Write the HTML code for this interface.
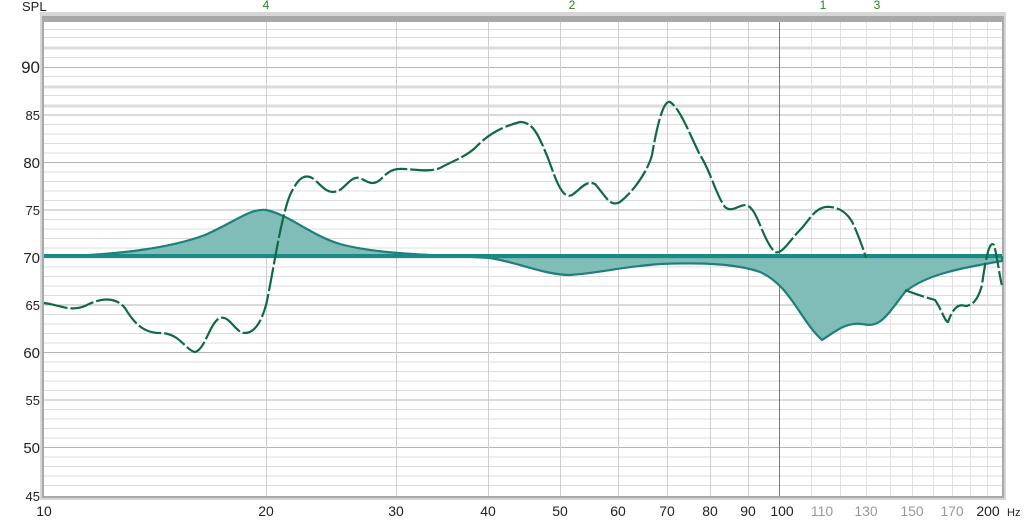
<!DOCTYPE html><html><head><style>body{margin:0;width:1024px;height:521px;background:#fff;overflow:hidden;font-family:"Liberation Sans",sans-serif}</style></head><body>
<svg width="1024" height="521" xmlns="http://www.w3.org/2000/svg" font-family="Liberation Sans, sans-serif">
<rect x="40" y="12" width="966" height="488" fill="#d6d6d6"/>
<rect x="42" y="16" width="962" height="482" fill="#a8a8a8"/>
<rect x="44" y="22" width="958" height="474" fill="#fff"/>
<g stroke="#dcdcdc" stroke-width="1">
<line x1="44" x2="1002" y1="29.5" y2="29.5"/><line x1="44" x2="1002" y1="37.5" y2="37.5"/><line x1="44" x2="1002" y1="48" y2="48" stroke-width="3"/><line x1="44" x2="1002" y1="57.5" y2="57.5"/>
<line x1="44" x2="1002" y1="76.5" y2="76.5"/><line x1="44" x2="1002" y1="87" y2="87" stroke-width="3"/><line x1="44" x2="1002" y1="95.5" y2="95.5"/><line x1="44" x2="1002" y1="106" y2="106" stroke-width="3"/>
</g>
<g stroke="#dcdcdc">
<path d="M44 124.5H1002M44 134H1002M44 143.5H1002M44 153H1002M44 172H1002M44 181.5H1002M44 191H1002M44 200.5H1002M44 219.5H1002M44 229H1002M44 238.5H1002M44 248H1002M44 267H1002M44 276.5H1002M44 286H1002M44 295.5H1002M44 314.5H1002M44 324H1002M44 333.5H1002M44 343H1002M44 362H1002M44 371.5H1002M44 381H1002M44 390.5H1002M44 409.5H1002M44 419H1002M44 428.5H1002M44 438H1002M44 457H1002M44 466.5H1002M44 476H1002M44 485.5H1002"/>
</g>
<g stroke="#b4b4b4">
<path d="M44 67.5H1002M44 115H1002M44 162.5H1002M44 210H1002M44 305H1002M44 352.5H1002M44 400H1002M44 447.5H1002"/>
</g>
<g stroke="#cfcfcf">
<path d="M266.5 22V496M396.5 22V496M488.5 22V496M560.5 22V496M618.5 22V496M667.5 22V496M710.5 22V496M748.5 22V496"/>
<path d="M811.5 22V496M840.5 22V496M866.5 22V496M890.5 22V496M912.5 22V496M933.5 22V496M952.5 22V496M970.5 22V496M987.5 22V496" stroke="#e0e0e0"/>
</g>
<line x1="779.5" x2="779.5" y1="22" y2="496" stroke="#7a7a7a"/>
<path d="M44 257 C120 255 170 248 205 235 C235 222 250 208 266 210 C290 215 310 235 340 244 C380 255 440 255 490 258 C520 263 545 275 570 275 C600 273 620 267 660 264 C710 262 740 265 760 272 C790 285 800 320 822 340 C835 332 845 322 862 324 C880 328 885 318 905 292 C925 275 960 268 1002 261 L1002 257 Z" fill="#80bcb8" stroke="#1f7f7a" stroke-width="2.2"/>
<line x1="44" y1="256" x2="1002" y2="256" stroke="#1a8a86" stroke-width="4"/>
<path d="M44 303 C60 305 70 312 85 306 C100 298 115 296 125 308 C135 325 145 333 160 333 C180 333 185 350 195 352 C205 350 210 322 220 318 C230 315 235 333 245 333 C255 333 262 320 266 305 C272 280 280 220 290 195 C298 178 305 172 315 180 C325 190 330 195 340 190 C348 184 352 176 360 178 C368 182 372 186 380 180 C388 172 392 168 405 169 C420 170 430 172 440 168 C455 160 465 157 475 148 C490 132 505 126 520 122 C535 122 540 140 548 158 C556 180 562 200 572 195 C582 188 586 180 595 184 C605 195 610 208 620 202 C635 190 648 170 652 155 C658 120 664 100 670 102 C680 108 690 135 700 155 C710 170 716 195 725 207 C732 213 738 205 746 205 C758 208 762 240 775 252 C782 255 790 240 800 230 C808 222 814 209 825 207 C835 206 848 210 855 228 C860 240 863 248 866 258" fill="none" stroke="#0f6a44" stroke-width="2.2" stroke-dasharray="24 3"/>
<path d="M905 290 C915 294 928 298 935 300 C942 310 945 322 948 322 C952 310 958 303 965 306 C972 306 978 300 982 285 C986 255 990 240 994 245 C998 260 1000 280 1002 285" fill="none" stroke="#0f6a44" stroke-width="2.2" stroke-dasharray="20 3"/>
<g font-size="13" fill="#222" text-anchor="end">
<text x="40" y="73" font-size="17">90</text><text x="40" y="120">85</text><text x="40" y="168" font-size="15">80</text><text x="40" y="215">75</text><text x="40" y="263" font-size="15">70</text><text x="40" y="310">65</text><text x="40" y="358" font-size="15">60</text><text x="40" y="405">55</text><text x="40" y="453" font-size="15">50</text><text x="40" y="501">45</text>
</g>
<text x="22" y="11" font-size="13" fill="#222">SPL</text>
<g font-size="12" fill="#1a8a1a" text-anchor="middle"><text x="266" y="9">4</text><text x="572" y="9">2</text><text x="823" y="9">1</text><text x="877" y="9">3</text></g>
<g font-size="14" fill="#222" text-anchor="middle">
<text x="44" y="516">10</text><text x="266" y="516">20</text><text x="396" y="516">30</text><text x="488" y="516">40</text><text x="560" y="516">50</text><text x="618" y="516">60</text><text x="667" y="516">70</text><text x="710" y="516">80</text><text x="748" y="516">90</text><text x="782" y="516">100</text>
<g fill="#999"><text x="822" y="516">110</text><text x="866" y="516">130</text><text x="912" y="516">150</text><text x="952" y="516">170</text></g>
<text x="988" y="516">200</text></g>
<text x="1007" y="516" font-size="11" fill="#222">Hz</text>
</svg></body></html>
